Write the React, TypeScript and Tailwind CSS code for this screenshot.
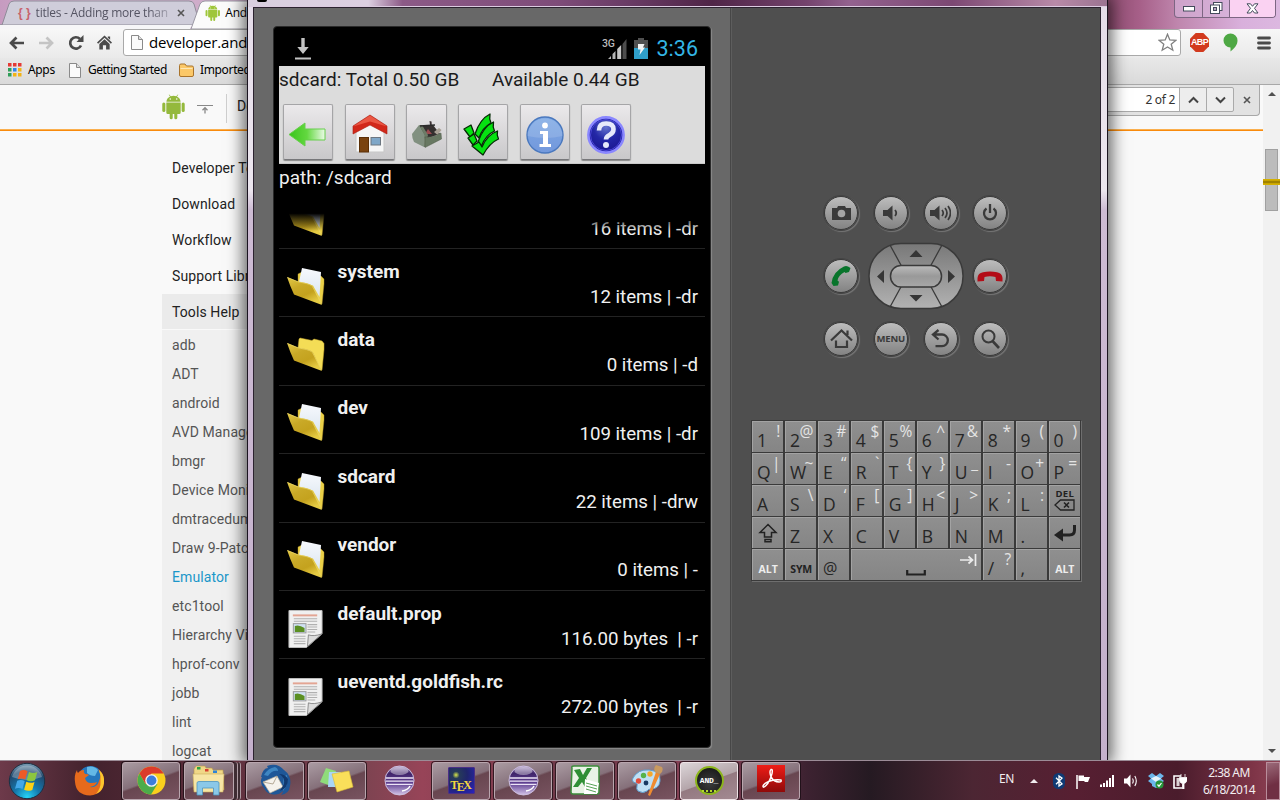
import React from "react";

const ROBOTO = "font-['Roboto','Noto_Sans',sans-serif]";
const NOTO = "font-['Noto_Sans','Open_Sans',sans-serif]";
const OPEN = "font-['Open_Sans','Noto_Sans',sans-serif]";

type IconProps = { className?: string };

/* ---------- browser icons ---------- */

function Android({ className }: IconProps) {
  return (
    <svg viewBox="0 0 24 26" className={className} fill="currentColor">
      <path d="M4.5 8.2h15v10.6a1.6 1.6 0 0 1-1.6 1.6H16v3.8a1.6 1.6 0 0 1-3.2 0v-3.8h-1.6v3.8a1.6 1.6 0 0 1-3.2 0v-3.8H6.1a1.6 1.6 0 0 1-1.6-1.6z" />
      <rect x="0.3" y="8.2" width="3.2" height="10" rx="1.6" />
      <rect x="20.5" y="8.2" width="3.2" height="10" rx="1.6" />
      <path d="M4.6 7.4C4.8 4.9 6.3 3 8.4 2L7 .3l.5-.3 1.6 1.7a8.500 8.500 0 0 1 5.800 0L16.500 0l.5.300L15.600 2c2.100 1 3.600 2.900 3.800 5.400z" />
      <circle cx="8.600" cy="4.700" r=".8" fill="#fff" />
      <circle cx="15.400" cy="4.700" r=".8" fill="#fff" />
    </svg>
  );
}

function Page() {
  return (
    <svg width="12" height="15" viewBox="0 0 12 15">
      <path d="M.5.500h7l4 4v10H.5z" fill="#fafafa" stroke="#8a8a8a" />
      <path d="M7.500.500v4h4" fill="#ddd" stroke="#8a8a8a" />
    </svg>
  );
}

function AppsGrid() {
  const c = ["#e53a35", "#e53a35", "#e53a35", "#2f9e58", "#2f86e8", "#f2b316", "#2f9e58", "#f2b316", "#f2b316"];
  return (
    <svg width="14" height="14" viewBox="0 0 14 14">
      {c.map((f, i) => (
        <rect key={i} x={(i % 3) * 5} y={Math.floor(i / 3) * 5} width="3.500" height="3.500" fill={f} />
      ))}
    </svg>
  );
}

const CloseX = () => (
  <svg width="8" height="8" viewBox="0 0 8 8">
    <path d="M1 1l6 6M7 1L1 7" stroke="#555" strokeWidth="1.600" />
  </svg>
);

function LeftArrow({ color, flip }: { color: string; flip?: boolean }) {
  return (
    <svg width="16" height="14" viewBox="0 0 16 14">
      <g transform={flip ? "translate(16 0) scale(-1 1)" : undefined}>
        <path d="M7.500 1.500L2 7l5.500 5.500M2.500 7H15" fill="none" stroke={color} strokeWidth="2.700" />
      </g>
    </svg>
  );
}

function BrowserTabs() {
  return (
    <div className="flex h-[29px] items-start overflow-hidden bg-[linear-gradient(90deg,#c69bc0_0%,#d8bcd4_8%,#c9a3c3_20%,#8a4a6c_86%,#a65f88_89%,#bf86ad_92%,#d9b0dc_97%,#dcb8e0_100%)]">
      <div className="relative h-[29px] w-[247px]">
        <svg width="247" height="29" viewBox="0 0 247 29" className="block">
          <path d="M0 25H2L9 4q1-3 5-3H189q4 0 5 3l6 21z" fill="#cfcdda" stroke="#8f8c99" />
          <path d="M191 29L200 4q1.500-3 5-3h43v28z" fill="#fbfbfb" stroke="#9a97a3" />
          <path d="M0 25h192l-2 4H0z" fill="#f6f6f8" />
        </svg>
        <div className="absolute inset-0 flex h-[26px] items-center">
          <span className="ml-[18px] flex w-[13px] justify-between text-[12px] font-bold whitespace-nowrap text-[#c7626c] font-['Liberation_Sans',sans-serif]">
            <i className="not-italic">{"{"}</i>
            <i className="not-italic">{"}"}</i>
          </span>
          <span className={`ml-[5px] w-[136px] text-[12px] tracking-[-0.24px] whitespace-nowrap text-[#555463] [mask-image:linear-gradient(90deg,#000_85%,rgba(0,0,0,0.35))] ${OPEN}`}>
            titles - Adding more than
          </span>
          <span className="ml-[9px]"><CloseX /></span>
          <Android className="ml-[20px] h-[16px] w-[16px] text-[#9fc63b]" />
          <span className={`ml-[5px] text-[12px] tracking-[-0.2px] text-black ${OPEN}`}>And</span>
        </div>
      </div>
      <div className="ml-auto mr-[4px] flex h-[18px] w-[102px] overflow-hidden rounded-b-[4px] border border-t-0 border-[#7d6683] bg-[#d9b8dd]/60">
        <div className="flex w-[28px] items-center justify-center border-r border-[#7d6683]">
          <svg width="12" height="6"><rect x=".5" y=".5" width="11" height="4.500" fill="#fff" stroke="#444b5c" /></svg>
        </div>
        <div className="flex w-[27px] items-center justify-center border-r border-[#7d6683] pb-[2px]">
          <svg width="13" height="12" viewBox="0 0 13 12">
            <rect x="3.500" y=".5" width="8.500" height="8" fill="#fff" stroke="#444b5c" />
            <rect x=".5" y="3" width="9" height="8.500" fill="#fff" stroke="#444b5c" />
            <rect x="3.500" y="5.500" width="3" height="3" fill="#b9a2c2" stroke="#444b5c" />
          </svg>
        </div>
        <div className="flex flex-1 items-center justify-center bg-[#fad2f2] pb-[1px]">
          <svg width="13" height="11" viewBox="0 0 13 11">
            <path d="M1 .8h3.500l2 2.500 2-2.500H12L8.500 5.300l3.500 4.700H8.500l-2-2.500-2 2.500H1l3.500-4.700z" fill="#fff" stroke="#444b5c" />
          </svg>
        </div>
      </div>
    </div>
  );
}

function BrowserToolbar() {
  return (
    <div className="flex h-[29px] items-center bg-gradient-to-b from-[#f7f7f7] to-[#eaeaea] pb-[2px] pl-[9px]">
      <LeftArrow color="#4a4a4a" />
      <span className="ml-[13px] flex"><LeftArrow color="#c4c4c4" flip /></span>
      <svg className="ml-[14px]" width="16" height="16" viewBox="0 0 16 16">
        <path d="M13 10.500A5.700 5.700 0 1 1 12 4" fill="none" stroke="#4a4a4a" strokeWidth="2.700" />
        <path d="M15.500 0v7H8.500z" fill="#4a4a4a" />
      </svg>
      <svg className="ml-[13px]" width="15" height="15" viewBox="0 0 16 15">
        <path d="M8 0l8 7.500-1.200 1.200L8 2.500 1.200 8.700 0 7.500zM11.500 1H14v3.600l-2.500-2.300z" fill="#4a4a4a" />
        <path d="M2.500 9L8 4l5.500 5v6H9.700v-4.500H6.300V15H2.500z" fill="#4a4a4a" />
      </svg>
      <div className="ml-[11px] flex h-[27px] w-[1058px] shrink-0 items-center rounded-[3px] border border-[#a9a9a9] bg-white pl-[7px]">
        <Page />
        <span className={`ml-[6px] text-[15px] tracking-[-0.2px] text-black ${OPEN}`}>developer.and</span>
        <svg className="mr-[3px] ml-auto" width="19" height="19" viewBox="0 0 19 19">
          <path d="M9.500 1.200l2.300 5.700 6.200.4-4.800 3.900 1.600 6-5.300-3.300-5.300 3.300 1.600-6L1 7.300l6.200-.4z" fill="#fff" stroke="#808080" strokeWidth="1.300" />
        </svg>
      </div>
      <div className="ml-[9px] flex h-[19px] w-[19px] items-center justify-center bg-[#d23a1e] [clip-path:polygon(30%_0,70%_0,100%_30%,100%_70%,70%_100%,30%_100%,0_70%,0_30%)]">
        <span className="text-[9px] font-bold tracking-[-0.7px] text-white font-['Liberation_Sans',sans-serif]">ABP</span>
      </div>
      <svg className="ml-[14px]" width="15" height="19" viewBox="0 0 15 19">
        <path d="M7.500.500a7 7 0 0 1 7 7c0 4.500-3 7.500-7 11v-4a7 7 0 0 1 0-14z" fill="#4ea844" />
      </svg>
      <svg className="ml-[19px]" width="14" height="14" viewBox="0 0 14 14">
        <path d="M1.500 2h11M1.500 7h11M1.500 12h11" stroke="#4a4a4a" strokeWidth="2.800" strokeLinecap="round" />
      </svg>
    </div>
  );
}

function Bookmarks() {
  return (
    <div className={`flex h-[27px] items-center border-b border-[#a8a8a8] bg-gradient-to-b from-[#e8e8e8] to-[#dadada] pb-[2px] pl-[8px] text-[12px] text-black ${NOTO}`}>
      <AppsGrid />
      <span className="ml-[6px] w-[28px] tracking-[-0.35px]">Apps</span>
      <span className="ml-[13px] flex"><Page /></span>
      <span className="ml-[7px] w-[79px] tracking-[-0.5px] whitespace-nowrap">Getting Started</span>
      <svg className="ml-[12px]" width="15" height="14" viewBox="0 0 15 14">
        <path d="M.5 2.500q0-1.500 1.500-1.500h4l1.500 2H13q1.500 0 1.500 1.500V12q0 1.500-1.500 1.500H2Q.5 13.500.5 12z" fill="#fbc868" stroke="#a9742c" />
        <path d="M1.500 5h12v1h-12z" fill="#fde7b5" />
      </svg>
      <span className="ml-[6px] tracking-[-0.35px]">Imported</span>
    </div>
  );
}

const SUB = ["adb", "ADT", "android", "AVD Manager", "bmgr", "Device Monitor", "dmtracedump", "Draw 9-Patch", "Emulator", "etc1tool", "Hierarchy Viewer", "hprof-conv", "jobb", "lint", "logcat"];

function WebPage() {
  return (
    <div className="flex min-h-0 flex-1 bg-[#f9f9f9]">
      <div className="flex min-w-0 flex-1 flex-col">
        <div className="flex h-[46px] shrink-0 items-start bg-[linear-gradient(180deg,transparent_44.5px,#fbb04f_44.5px,#f98b0d_45px)]">
          <Android className="mt-[9px] ml-[162px] h-[26px] w-[23px] text-[#94b93c]" />
          <svg className="mt-[20px] ml-[12px]" width="16" height="9" viewBox="0 0 16 9">
            <path d="M0 .500h16" stroke="#888" />
            <path d="M8 8.500V3M5.500 5.300L8 2.700l2.500 2.600" fill="none" stroke="#888" strokeWidth="1.300" />
          </svg>
          <div className="mt-[9px] ml-[13px] h-[29px] w-px bg-[#cfcfcf]" />
          <span className={`mt-[11px] ml-[10px] text-[14px] text-[#222] ${ROBOTO}`}>Develop</span>
          <div className={`ml-auto flex h-[31px] w-[170px] items-center rounded-br-[4px] border-r border-b border-[#a8a8a8] bg-[#e2e2e2] pb-[1px] text-[12px] text-[#333] ${NOTO}`}>
            <div className="flex h-[25px] w-[90px] items-center justify-end border border-[#aaa] bg-white pr-[4px] tracking-[-0.3px]">2 of 2</div>
            <div className="-ml-px flex h-[25px] w-[28px] items-center justify-center border border-[#aaa] bg-[#ededed]">
              <svg width="11" height="8" viewBox="0 0 11 8"><path d="M1 6.500L5.500 2 10 6.500" fill="none" stroke="#444" strokeWidth="2" /></svg>
            </div>
            <div className="-ml-px flex h-[25px] w-[28px] items-center justify-center rounded-r-[2px] border border-[#aaa] bg-[#ededed]">
              <svg width="11" height="8" viewBox="0 0 11 8"><path d="M1 1.500L5.500 6 10 1.500" fill="none" stroke="#444" strokeWidth="2" /></svg>
            </div>
            <span className="ml-[9px]"><CloseX /></span>
          </div>
          <div className="w-[3px]" />
        </div>
        <nav className={`ml-[162px] w-[200px] pt-[19px] text-[14px] tracking-[0.1px] text-[#222] ${ROBOTO}`}>
          {["Developer Tools", "Download", "Workflow", "Support Library"].map((t) => (
            <div key={t} className="h-[36px] pl-[10px] leading-[36px]">{t}</div>
          ))}
          <div className="h-[35px] bg-[#ebebeb] pl-[10px] leading-[36px]">Tools Help</div>
          <div className="mt-px h-[440px] bg-[#f0f0f0] text-[#555]">
            {SUB.map((t) => (
              <div key={t} className={t === "Emulator" ? "h-[29px] pl-[10px] leading-[31px] text-[#1b97c9]" : "h-[29px] pl-[10px] leading-[31px]"}>{t}</div>
            ))}
          </div>
        </nav>
      </div>
      <div className="flex w-[17px] shrink-0 flex-col items-center bg-[#f1f1f1]">
        <div className="mt-[7px] border-x-[4px] border-b-[4px] border-x-transparent border-b-[#505050]" />
        <div className="mt-[53px] flex h-[62px] w-[13px] flex-col justify-center border border-[#a0a0a0] bg-[#bcbcbc]" />
        <div className="-mt-[32px] flex h-[6px] w-[17px] flex-col justify-between border-y border-[#d4b000] bg-[#c9a400]">
          <div className="mt-px h-[2px] bg-[#a08200]" />
        </div>
        <div className="mt-auto mb-[7px] border-x-[4px] border-t-[4px] border-x-transparent border-t-[#505050]" />
      </div>
    </div>
  );
}

/* ---------- file browser screen ---------- */

function Folder({ empty }: { empty?: boolean }) {
  return (
    <svg width="38" height="38" viewBox="0 0 38 38" className="block">
      <defs>
        <linearGradient id="fold" x1="0" y1="0" x2=".6" y2="1">
          <stop offset="0" stopColor="#e4ca48" />
          <stop offset=".4" stopColor="#c9a927" />
          <stop offset=".7" stopColor="#c4a21e" />
          <stop offset="1" stopColor="#e6cc44" />
        </linearGradient>
        <linearGradient id="sheet" x1="0" y1="0" x2="0" y2="1">
          <stop offset="0" stopColor="#f7f9fd" />
          <stop offset="1" stopColor="#dbe6f0" />
        </linearGradient>
      </defs>
      {empty ? (
        <path d="M12 5l1-1 12 2.500 2-1.500 8 2 2 2.500v6L35 36 11 14z" fill="#f4dd56" stroke="#c8a82c" strokeWidth=".5" />
      ) : (
        <>
          <path d="M11 6l3-1.500L34 8l3 3v5l-2 20-24-22z" fill="#ead048" stroke="#b8982a" strokeWidth=".4" />
          <path d="M15 0l19 4-1.500 25L26 17.500 12 14z" fill="url(#sheet)" />
        </>
      )}
      <path d="M0 9L11 13.500L16 14.500Q24 16 26 18.500L35 37L7 26.500Q3 18 0 9z" fill="url(#fold)" />
      <path d="M.5 9.500L11 13.800L16 14.800Q24 16.300 25.700 18.800L34.500 36" fill="none" stroke="#ecd868" strokeWidth=".7" />
    </svg>
  );
}

function DocIcon() {
  return (
    <svg width="37" height="40" viewBox="0 0 38 40" className="block">
      <path d="M2 1h34v24L20 39H2z" fill="#f0f0f0" stroke="#bbb" />
      <path d="M6 6h25" stroke="#e3a593" strokeWidth="2" />
      <path d="M7 9.500h24M7 12h24M21 15.500h10M21 18h10M21 20.500h10M21 23h8M7 27.500h12M7 30h12M7 32.500h12M7 35h12" stroke="#b0b0b0" strokeWidth="1.100" />
      <rect x="6.500" y="14.500" width="13" height="9.500" fill="#cfe0f2" stroke="#999" />
      <path d="M8 17q4-2 10 2v4H8z" fill="#5b8f22" />
      <path d="M21 38l1-12q5 2 14-1z" fill="#dcdcdc" stroke="#777" strokeWidth=".8" />
    </svg>
  );
}

const ROWS: { name: string; info: string; kind: "full" | "empty" | "doc" }[] = [
  { name: "system", info: "12 items | -dr", kind: "full" },
  { name: "data", info: "0 items | -d", kind: "empty" },
  { name: "dev", info: "109 items | -dr", kind: "full" },
  { name: "sdcard", info: "22 items | -drw", kind: "full" },
  { name: "vendor", info: "0 items | -", kind: "full" },
  { name: "default.prop", info: "116.00 bytes  | -r", kind: "doc" },
  { name: "ueventd.goldfish.rc", info: "272.00 bytes  | -r", kind: "doc" },
];

const ICON_OFFSET = {
  full: "mt-[9px] w-[50.500px]",
  empty: "mt-[7.500px] w-[50.500px]",
  doc: "mt-[8px] w-[50.500px]",
};

function ToolButton({ w, children }: { w: string; children: React.ReactNode }) {
  return (
    <div className={`flex h-[56px] items-center justify-center rounded-[2px] border border-[#a5a5a7] border-b-[#77777a] bg-gradient-to-b from-[#ebe9eb] to-[#c9c8ca] pt-[5px] shadow-[0_1px_1px_#888] ${w}`}>
      {children}
    </div>
  );
}

function Tools() {
  return (
    <div className="flex items-start pl-[4px]">
      <ToolButton w="w-[50px]">
        <svg className="-ml-[2px]" width="38" height="26" viewBox="0 0 38 26">
          <defs>
            <linearGradient id="arr"><stop offset="0" stopColor="#39c41c" /><stop offset=".5" stopColor="#63d840" /><stop offset="1" stopColor="#ecfbe8" /></linearGradient>
          </defs>
          <path d="M1 12.500L17 1v6h20v11H17v6z" fill="url(#arr)" stroke="#67cf4c" />
        </svg>
      </ToolButton>
      <div className="w-[12px]" />
      <ToolButton w="w-[50px]">
        <svg className="-ml-[1px] -mt-[2px]" width="36" height="40" viewBox="0 0 36 40">
          <path d="M4 16L18 8l14 8v22H4z" fill="#f6f6f6" stroke="#c7c7c7" />
          <path d="M18 1L35 12v8L18 11 1 20v-8z" fill="#d2281a" stroke="#a81c10" strokeWidth=".6" />
          <path d="M18 1.500L35 12.500 18 7.500 1 12.500z" fill="#ea5744" />
          <rect x="7.500" y="23.500" width="9" height="14.500" fill="#7a4310" stroke="#5c3008" />
          <rect x="19" y="23.500" width="9.500" height="7.500" fill="#7fa7c8" stroke="#6c7680" />
        </svg>
      </ToolButton>
      <div className="w-[11px]" />
      <ToolButton w="w-[41px]">
        <svg width="32" height="30" viewBox="0 0 32 30">
          <path d="M8 6l14-1 7 9-15 5z" fill="#34302f" />
          <path d="M14 14l3-5 4 5z" fill="#9c4a50" />
          <path d="M18.500 1l2 .5.5 6-1.500 1z" fill="#3c3335" />
          <path d="M23 12l5-4 2.500 2-4 5z" fill="#a9a195" />
          <path d="M1 14L8 5l6 10-1 12L3 22q-2-4-2-8z" fill="#819080" />
          <path d="M8 5l3 0 6 10-3 12h-1l.5-12z" fill="#6c7b66" />
          <path d="M14 17q9 1 16-4l.5 6L14 27.500z" fill="#687862" stroke="#4c5847" strokeWidth=".5" />
          <path d="M9 6L24 5" stroke="#2b2b2b" strokeWidth="1.300" />
        </svg>
      </ToolButton>
      <div className="w-[11px]" />
      <ToolButton w="w-[50px]">
        <svg className="-ml-[3px]" width="37" height="43" viewBox="0 0 37 43" fill="#06e311" stroke="#052b05" strokeWidth="1.300" strokeLinejoin="round">
          <path d="M1 16l7-4 3 8-4 4z" />
          <path d="M12 21Q17 6 27 1q-1 5 1 9-9 5-12 15z" />
          <path d="M5 25l6-4 3 7-4 4z" />
          <path d="M15 29Q20 14 30.500 9q-1 5 1 9-9 4-13 15z" />
          <path d="M9 33l7-4 3 5Q24 22 34.500 18q-1 4 1 8-9 4-15.500 16z" />
        </svg>
      </ToolButton>
      <div className="w-[12px]" />
      <ToolButton w="w-[50px]">
        <svg width="38" height="38" viewBox="0 0 38 38">
          <defs><linearGradient id="inf" x1="0" y1="0" x2="0" y2="1"><stop offset="0" stopColor="#7ea9e4" /><stop offset="1" stopColor="#7398dc" /></linearGradient></defs>
          <circle cx="19" cy="19" r="18" fill="url(#inf)" stroke="#4a78be" strokeWidth="1.400" />
          <path d="M1.500 20a17.500 17.500 0 0 1 35 0q-17 4-35 0z" fill="#fff" opacity=".14" />
          <circle cx="19" cy="9.500" r="2.900" fill="#fff" />
          <path d="M14 15h8v13h3v3H13.500v-3h3.500V18h-3z" fill="#fff" />
        </svg>
      </ToolButton>
      <div className="w-[11px]" />
      <ToolButton w="w-[50px]">
        <svg width="38" height="38" viewBox="0 0 38 38">
          <defs><radialGradient id="hlp" cx=".5" cy=".25" r=".8"><stop offset="0" stopColor="#6474cf" /><stop offset=".5" stopColor="#2327a6" /><stop offset="1" stopColor="#1a1690" /></radialGradient></defs>
          <circle cx="19" cy="19" r="17.600" fill="#1c1c9c" stroke="#8a87ff" strokeWidth="2.600" />
          <circle cx="19" cy="19" r="15.500" fill="url(#hlp)" stroke="#4a46d8" />
          <path d="M12 14.500q0-7 7.200-7 7.300 0 7.300 5.800 0 3.700-4 5.700-3.500 1.800-3.500 4.500" fill="none" stroke="#e6e9fb" strokeWidth="4.600" />
          <circle cx="19" cy="29" r="3" fill="#e6e9fb" />
        </svg>
      </ToolButton>
    </div>
  );
}

function PhoneScreen() {
  return (
    <div className={`flex h-[722px] w-[438px] flex-col overflow-hidden rounded-[4px] border border-[#2a2a2a] bg-black px-[5px] shadow-[1px_1px_1px_#8a8a8a] ${ROBOTO}`}>
      <div className="flex h-[39px] shrink-0 items-center pt-[4px] pr-[7px] pl-[16px]">
        <svg width="16" height="22" viewBox="0 0 16 22">
          <path d="M6.300 0h3.400v9h4L8 16 2.300 9h4z" fill="#c3c3c3" />
          <path d="M0 20.500h16" stroke="#c3c3c3" strokeWidth="2" />
        </svg>
        <span className="ml-auto -mt-[9px] text-[10.500px] leading-none font-medium tracking-[-0.3px] text-[#bbb]">3G</span>
        <svg className="-ml-[7px]" width="19" height="20" viewBox="0 0 19 20">
          <path d="M0 20h3v-3zM4.500 20h3v-8l-3 3z" fill="#b5b5b5" />
          <path d="M14.500 20h4V0l-4 5z" fill="#4d4d4d" />
          <path d="M9.200 20h4V6l-4 4z" fill="#c7c7c7" />
        </svg>
        <svg className="mr-px ml-[7px]" width="14" height="21" viewBox="0 0 14 21">
          <path d="M4 0h6v2h4v8H0V2h4z" fill="#505050" />
          <path d="M0 10h14v11H0z" fill="#2f9fca" />
          <path d="M4 6h6.500L9 9.500h2L5.500 17l1-5.500H4z" fill="#f4f4f4" />
        </svg>
        <span className="mt-[1px] ml-[8px] text-[21.500px] leading-none text-[#33b5e5]">3:36</span>
      </div>
      <div className="h-[98px] shrink-0 border-b border-[#c9c9c9] bg-[#dcdcdc] text-[19px] text-[#1b1b1b]">
        <div className="flex h-[38px] pt-[1px] leading-[26px] whitespace-nowrap">
          <span className="w-[213px]">sdcard: Total 0.50 GB</span>
          <span>Available 0.44 GB</span>
        </div>
        <Tools />
      </div>
      <div className="h-[25px] shrink-0 text-[19px] leading-[27px] text-[#f0f0f0]">path: /sdcard</div>
      <div className="relative min-h-0 flex-1 overflow-hidden text-[19px] text-[#f0f0f0]">
        <div className="flex h-[60px] border-b border-[#232323] pr-[7px] pl-[8px]">
          <div className="mt-[10px]"><Folder /></div>
          <span className="mt-[27.500px] ml-auto text-[18.600px] leading-[25px]">16 items | -dr</span>
        </div>
        {ROWS.map((r) => (
          <div key={r.name} className="flex h-[68.400px] border-b border-[#232323] pt-[9.600px] pr-[7px] pl-[8px]">
            <div className={ICON_OFFSET[r.kind]}>{r.kind === "doc" ? <DocIcon /> : <Folder empty={r.kind === "empty"} />}</div>
            <div className="flex flex-1 flex-col">
              <span className="leading-[25.300px] font-bold">{r.name}</span>
              <span className="mt-[1px] self-end text-[18.700px] leading-[25.300px] whitespace-pre">{r.info}</span>
            </div>
          </div>
        ))}
        <div className="absolute inset-x-0 top-0 h-[42px] bg-[linear-gradient(180deg,#000_0%,#000_58%,transparent_100%)]" />
      </div>
    </div>
  );
}

/* ---------- hardware controls ---------- */

function Round({ children }: { children: React.ReactNode }) {
  return (
    <div className="flex h-[34px] w-[34px] items-center justify-center rounded-full border border-[#3b3b3b] bg-gradient-to-b from-[#bdbdbd] to-[#838383] shadow-[0_0_0_1px_#444,1px_1px_1px_1px_#777]">
      {children}
    </div>
  );
}

function DPad() {
  return (
    <svg width="96" height="68" viewBox="0 0 96 68">
      <defs>
        <linearGradient id="pad" x1="0" y1="0" x2="0" y2="1"><stop offset="0" stopColor="#787878" /><stop offset="1" stopColor="#b2b2b2" /></linearGradient>
        <linearGradient id="mid" x1="0" y1="0" x2="0" y2="1"><stop offset="0" stopColor="#bcbcbc" /><stop offset=".5" stopColor="#999" /><stop offset="1" stopColor="#a8a8a8" /></linearGradient>
      </defs>
      <rect x="1" y="1.500" width="94" height="65" rx="32" fill="url(#pad)" stroke="#3a3a3a" strokeWidth="1.500" />
      <path d="M22 3l12 22M74 3L62 25M22 65l12-22M74 65L62 43" stroke="#3a3a3a" strokeWidth="1.300" />
      <rect x="22.500" y="23.500" width="51" height="21.500" rx="10.500" fill="url(#mid)" stroke="#3a3a3a" strokeWidth="1.500" />
      <path d="M41.500 15h13L48 8zM41.500 53h13L48 59.500zM16 28v13l-7-6.500zM80 28v13l7-6.500z" fill="#363636" />
    </svg>
  );
}

function Controls() {
  const g = "#3a3a3a";
  return (
    <div className="grid w-[184px] grid-cols-[34px_34px_34px_34px] gap-x-[15.800px] gap-y-[29px]">
      <Round>
        <svg width="19" height="14" viewBox="0 0 19 14"><path d="M0 2h5l1-2h7l1 2h5v12H0z" fill={g} /><circle cx="9.500" cy="7.500" r="3.800" fill="#a4a4a4" /></svg>
      </Round>
      <Round>
        <svg width="16" height="16" viewBox="0 0 16 16"><path d="M0 5h4.500L9.500.500v15L4.500 11H0z" fill={g} /><path d="M12 5q2.500 3 0 6" fill="none" stroke={g} strokeWidth="1.800" /></svg>
      </Round>
      <Round>
        <svg width="21" height="16" viewBox="0 0 21 16"><path d="M0 5h4.500L9.500.500v15L4.500 11H0z" fill={g} /><path d="M12 5q2.500 3 0 6M15 3q4 5 0 10M18 1q5 7 0 14" fill="none" stroke={g} strokeWidth="1.700" /></svg>
      </Round>
      <Round>
        <svg width="16" height="18" viewBox="0 0 16 18"><path d="M4.500 4.500a6 6 0 1 0 7 0M8 0v9" fill="none" stroke={g} strokeWidth="2.300" /></svg>
      </Round>
      <Round>
        <svg width="22" height="22" viewBox="0 0 22 22"><path d="M14 1.500q2-1 4 0l2.500 1.500-1.500 4-3.500 1-1-1q-6 3-7 8.500l1.500 1.200-1 3.800-4.500.5-2-3Q3 6.500 14 1.500z" fill="#08742b" /></svg>
      </Round>
      <div className="col-span-2 -my-[17px] -ml-[6px] w-[96px]"><DPad /></div>
      <Round>
        <svg width="26" height="11" viewBox="0 0 26 11"><path d="M.5 7Q1 2 6 1.200q7-1.500 14 0 5 .8 5.500 5.800v3.500l-6.500-.5-.5-4q-5.500-1.500-11 0l-.5 4-6.500.5z" fill="#b30d18" /></svg>
      </Round>
      <Round>
        <svg width="23" height="20" viewBox="0 0 23 20"><path d="M1 11.500L11.500 1.500 22 11.500M6 11.500v6.500h11v-6.500M17.500 6V1.500" fill="none" stroke={g} strokeWidth="2.200" /></svg>
      </Round>
      <Round><span className={`pt-[1px] text-[9.500px] font-bold tracking-[-0.2px] text-[#3a3a3a] ${OPEN}`}>MENU</span></Round>
      <Round>
        <svg width="19" height="20" viewBox="0 0 19 20"><path d="M7.500 1L2 5.500l5.500 5M2 5.500h9a5.700 5.700 0 0 1 0 11.700H4.500" fill="none" stroke={g} strokeWidth="2.300" /></svg>
      </Round>
      <Round>
        <svg width="19" height="20" viewBox="0 0 19 20"><circle cx="7.500" cy="7.500" r="6" fill="none" stroke={g} strokeWidth="2" /><path d="M11.500 12l6.500 7" stroke={g} strokeWidth="2.600" /></svg>
      </Round>
    </div>
  );
}

const KEYS: [string, string][] = [
  ["1", "!"], ["2", "@"], ["3", "#"], ["4", "$"], ["5", "%"], ["6", "^"], ["7", "&"], ["8", "*"], ["9", "("], ["0", ")"],
  ["Q", "|"], ["W", "~"], ["E", "“"], ["R", "`"], ["T", "{"], ["Y", "}"], ["U", "_"], ["I", "-"], ["O", "+"], ["P", "="],
  ["A", ""], ["S", "\\"], ["D", "‘"], ["F", "["], ["G", "]"], ["H", "<"], ["J", ">"], ["K", ";"], ["L", ":"], ["DEL", ""],
  ["SHIFT", ""], ["Z", ""], ["X", ""], ["C", ""], ["V", ""], ["B", ""], ["N", ""], ["M", ""], [".", ""], ["ENTER", ""],
  ["ALT", ""], ["SYM", ""], ["@", ""], ["SPACE", ""], ["/", "?"], [",", ""], ["ALT", ""],
];

function KeyFace({ k, s }: { k: string; s: string }) {
  if (k === "DEL")
    return (
      <div className="flex w-full flex-col items-center text-[9.500px] leading-[11px] font-bold tracking-[0.3px] text-[#222]">
        <span className="mt-[2px]">DEL</span>
        <svg width="21" height="12" viewBox="0 0 21 12"><path d="M6.500 1H20v10H6.500L1 6z" fill="none" stroke="#222" strokeWidth="1.300" /><path d="M10 3.500l5 5M15 3.500l-5 5" stroke="#222" strokeWidth="1.600" /></svg>
      </div>
    );
  if (k === "SHIFT")
    return <svg className="m-auto" width="20" height="20" viewBox="0 0 20 20"><path d="M10 1.500l8 8h-4.500v4.500h-7V9.500H2zM7 16.500h6v2.300H7z" fill="none" stroke="#222" strokeWidth="1.500" /></svg>;
  if (k === "ENTER")
    return <svg className="m-auto" width="24" height="18" viewBox="0 0 24 18"><path d="M21.500 1v5q0 5-5 5H7" fill="none" stroke="#222" strokeWidth="3" /><path d="M1 11l9-6.500v13z" fill="#222" /></svg>;
  if (k === "SPACE")
    return (
      <div className="flex w-full flex-col">
        <svg className="mt-[4px] mr-[4px] self-end" width="17" height="12" viewBox="0 0 17 12"><path d="M0 6h12M8.500 2.500L12.500 6 8.500 9.500M15.500 0v12" fill="none" stroke="#ececec" strokeWidth="1.700" /></svg>
        <svg className="mt-[4px] self-center" width="20" height="6" viewBox="0 0 20 6"><path d="M1.200 0v4.500h17.600V0" fill="none" stroke="#222" strokeWidth="2.200" /></svg>
      </div>
    );
  if (k === "ALT") return <span className="m-auto pt-[9px] text-[10.500px] font-bold text-[#ededed]">ALT</span>;
  if (k === "SYM") return <span className="m-auto pt-[9px] text-[10.500px] font-bold tracking-[-0.2px] text-[#222]">SYM</span>;
  return (
    <div className="flex w-full justify-between">
      <span className={"mt-[7px] -mr-[6px] ml-[4px] leading-[22px] text-[#262626] " + (k === "@" ? "text-[16px]" : "text-[17.500px]")}>{k}</span>
      <span className="mr-[3px] text-[15.500px] leading-[19px] text-[#e4e4e4]">{s}</span>
    </div>
  );
}

function Keyboard() {
  return (
    <div className={`grid h-[161px] w-[330px] grid-cols-10 grid-rows-5 gap-[1.500px] border border-[#3a3a3a] bg-[#3a3a3a] shadow-[1px_1px_0_#6e6e6e] ${OPEN}`}>
      {KEYS.map(([k, s], i) => (
        <div key={i} className={"flex min-w-0 overflow-hidden border-t border-l border-[#a3a3a3] bg-gradient-to-b from-[#8f8f8f] to-[#858585] " + (k === "SPACE" ? "col-span-4" : "")}>
          <KeyFace k={k} s={s} />
        </div>
      ))}
    </div>
  );
}

function EmulatorWindow() {
  return (
    <div className="absolute top-0 left-[247px] flex h-[760px] w-[861px] flex-col border-x border-[#1b1420] bg-[linear-gradient(180deg,#e4dbe8_0px,#ece6ee_190px,#cdbbd3_210px,#c3b0cb_760px)] shadow-[0_0_15px_4px_rgba(0,0,0,0.6)]">
      <div className="h-[7px] shrink-0 overflow-hidden border-b border-[#dccbe0] bg-[linear-gradient(90deg,#d9cfdf_0%,#dccfe1_14%,#8c5a87_18%,#7e4c79_36%,#6a3c66_44%,#4f2547_54%,#74436d_65%,#93628f_70%,#7c4873_82%,#b88aa8_94%,#9b7391_100%)]">
        <div className="ml-[9px] h-[1.500px] w-[10px] rounded-b bg-black" />
      </div>
      <div className="mr-[6px] ml-[5px] flex min-h-0 flex-1 border border-b-0 border-[#2b222f]">
        <div className="w-[477px] shrink-0 border-r border-[#474747] bg-[#686868] pt-[18px] pl-[19px]">
          <PhoneScreen />
        </div>
        <div className="flex flex-1 flex-col border-l border-[#5d5d5d] bg-[#4f4f4f]">
          <div className="mt-[188px] ml-[92px]"><Controls /></div>
          <div className="mt-[64px] ml-[19px]"><Keyboard /></div>
        </div>
      </div>
    </div>
  );
}

/* ---------- taskbar ---------- */

function TaskItem({ children, plain, active, stack }: { children: React.ReactNode; plain?: boolean; active?: boolean; stack?: boolean }) {
  if (plain) return <div className="mr-[4px] flex h-[38px] w-[58px] items-center justify-center pb-[1px]">{children}</div>;
  return (
    <div className={"mr-[4px] flex h-[38px] " + (stack ? "w-[58px]" : "")}>
      <div className={"flex h-[38px] items-center justify-center rounded-[3px] border pb-[2px] shadow-[0_0_0_1px_rgba(20,10,15,0.7)] " + (stack ? "w-[50px] " : "w-[58px] ") + (active ? "border-[#eee2e6] bg-[linear-gradient(160deg,#dcd5d8_0%,#b4a5aa_50%,#947981_52%,#a38a92_100%)]" : "border-[#b9a6ae] bg-[linear-gradient(160deg,#aa9ba2_0%,#85707a_48%,#684650_52%,#795461_100%)]")}>
        {children}
      </div>
      {stack && <div className="h-[38px] w-[4px] rounded-r-[3px] border-r border-[#ae9ba3] bg-[#3f2c33]" />}
      {stack && <div className="h-[38px] w-[3px] rounded-r-[3px] border-r border-[#ae9ba3] bg-[#3f2c33]" />}
    </div>
  );
}

const Eclipse = () => (
  <svg width="31" height="31" viewBox="0 0 31 31">
    <defs><linearGradient id="ecl" x1="0" y1="0" x2="0" y2="1"><stop offset="0" stopColor="#b6a2cd" /><stop offset=".25" stopColor="#3f2469" /><stop offset=".6" stopColor="#614293" /><stop offset="1" stopColor="#d4c4e8" /></linearGradient></defs>
    <circle cx="15.500" cy="15.500" r="14.500" fill="url(#ecl)" stroke="#cdbfdf" />
    <path d="M2 13h27M1.500 16.200h28M2.500 19.400h26" stroke="#ece4f6" strokeWidth="1.300" />
    <ellipse cx="15.500" cy="6" rx="9" ry="4" fill="#fff" opacity=".4" />
    <path d="M18 26q6-1 8-5" stroke="#fff" strokeWidth="1.500" fill="none" />
  </svg>
);

function Taskbar() {
  return (
    <div className="flex h-[40px] shrink-0 items-start border-t border-[#9c8c97] bg-[linear-gradient(90deg,#6d3a4a_0%,#43222d_7%,#5a2c3a_16%,#7a4350_28%,#974458_33%,#6a3847_45%,#8a4258_55%,#3d2231_63%,#251a22_68%,#4c2633_76%,#571f32_84%,#4a1c2c_92%,#7f3548_98%,#8d4355_100%)] pt-px shadow-[0_-1px_0_#17101a]">
      <div className="flex h-[38px] w-[60px] items-center pl-[8px]">
        <svg width="38" height="38" viewBox="0 0 38 38">
          <defs><radialGradient id="orb" cx=".5" cy=".95" r=".9"><stop offset="0" stopColor="#26d3f7" /><stop offset=".4" stopColor="#1479ae" /><stop offset=".8" stopColor="#20486e" /><stop offset="1" stopColor="#6f93ad" /></radialGradient></defs>
          <circle cx="19" cy="19" r="17.700" fill="url(#orb)" stroke="#1c3144" />
          <path d="M4 15a15.500 15.500 0 0 1 30 0q-15 6-30 0z" fill="#fff" opacity=".28" />
          <path d="M12 9q4-2 7.500.3l-2.300 8.200q-3.500-2-7.500-.3z" fill="#ee5a27" />
          <path d="M21 10q4 2 8.300 0l-2.300 8.200q-4 2-8.300 0z" fill="#8cc63f" />
          <path d="M9.200 18.800q4-1.800 7.500.3l-2.200 8q-3.500-2.200-7.500-.4z" fill="#43a7e8" />
          <path d="M18.300 19.700q4 2.200 8.200.2l-2.200 8q-4.500 2-8.200-.2z" fill="#fcd116" />
        </svg>
      </div>
      <TaskItem plain>
        <svg width="31" height="31" viewBox="0 0 31 31">
          <circle cx="16.500" cy="13.500" r="12.500" fill="#2577bd" />
          <path d="M13 2q7-2 11 3l-3 6q-5 0-8-3z" fill="#63b8e6" />
          <path d="M3 5q0 2 1 3 2-3 6-3-1 2 1 4 3 0 4 1l-4 3q1 5 6 5 4 0 6-1-1 4-7 5 7 1 9-6 3-6-1-12 6 4 6 12Q30 29 16 30.500 2 30 1 17 0 10 3 5z" fill="#e66a1c" />
          <path d="M25 5q6 5 5 13-1 8-8 11 5-6 4.500-12Q27 10 25 5z" fill="#fbc62e" />
        </svg>
      </TaskItem>
      <TaskItem>
        <svg width="29" height="29" viewBox="0 0 29 29">
          <circle cx="14.500" cy="14.500" r="14" fill="#f9cf1d" />
          <path d="M2.400 7.500A14 14 0 0 1 26.700 7.500H14.500L8.500 18z" fill="#db3b2b" />
          <path d="M2.400 7.500A14 14 0 0 0 14 28.500L20.500 18 8.500 18z" fill="#4cac4a" />
          <circle cx="14.500" cy="14.500" r="6.300" fill="#f2f2f2" />
          <circle cx="14.500" cy="14.500" r="4.900" fill="#3c7edb" />
        </svg>
      </TaskItem>
      <TaskItem stack>
        <svg width="34" height="31" viewBox="0 0 34 31">
          <path d="M2 4l2-3h9l1 2h6l1 2h10l1 20H2z" fill="#f0d787" stroke="#b6954a" strokeWidth=".6" />
          <rect x="5" y="2" width="3.500" height="2.500" fill="#2da33f" /><rect x="13" y="4" width="3.500" height="2.500" fill="#d6402f" /><rect x="21" y="5.500" width="4" height="2.500" fill="#2d84d6" />
          <path d="M1 9h31l-1 18H2z" fill="#f7e5a4" stroke="#c9ab5a" strokeWidth=".6" />
          <path d="M5 30V18q0-1.500 2-1.500h18q2 0 2 1.500v12h-5.500v-7h-11v7z" fill="#8bc8e8" stroke="#4d94c0" strokeWidth=".8" />
        </svg>
      </TaskItem>
      <TaskItem>
        <svg width="32" height="32" viewBox="0 0 32 32">
          <path d="M2 13Q4 4 9 4l-1-2Q18-2 25 6q8 6 6 16-1 8-9 9 2-2 2-4-5 5-12 3-5-1-7-6-5-5-2-11z" fill="#1f5798" />
          <path d="M5 11q4-7 11-8 3 1 3 4-6-1-10 5zM28 11q2 9-4 16 1-8 0-14z" fill="#3f86c2" />
          <path d="M4 18l14-6 6 11-13 6z" fill="#f5f2ec" stroke="#b9ac97" strokeWidth=".7" />
          <path d="M4 18l10 2 4-8" fill="none" stroke="#a39781" strokeWidth=".8" />
          <path d="M20 10q6 3 5 10l-4 7q8-3 8-12-3-5-9-5z" fill="#12396f" />
        </svg>
      </TaskItem>
      <TaskItem>
        <svg width="34" height="26" viewBox="0 0 34 26">
          <path d="M6 1l10 3-5 15-11-4z" fill="#8fdc7b" />
          <path d="M9 5h12v15H8z" fill="#a9d6f7" />
          <path d="M12 7l17-3 4 16-16 5z" fill="#f9df5a" stroke="#d8ba35" strokeWidth=".6" />
        </svg>
      </TaskItem>
      <TaskItem plain><Eclipse /></TaskItem>
      <TaskItem>
        <div className="flex h-[27px] w-[27px] items-end justify-center rounded-[1px] border border-[#4b2f86] bg-[radial-gradient(circle_at_28%_28%,#d8e84a_0%,#263a5a_14%,#20256b_45%,#2a23bf_100%)] text-[12px] leading-[15px] font-bold text-[#f2d640] font-['Liberation_Serif',serif]">
          <span>T</span><span className="-mx-[1.500px] -mb-[2px]">E</span><span>X</span>
        </div>
      </TaskItem>
      <TaskItem><Eclipse /></TaskItem>
      <TaskItem>
        <svg width="30" height="30" viewBox="0 0 30 30">
          <path d="M2 3Q1 1 4 1h23q2 0 2 2v24q0 2-2 2H3q-2 0-2-2z" fill="#e9f3e6" stroke="#3c8d3b" strokeWidth="1.500" />
          <path d="M4 5l6-1 3 6 4-7h5l-6 10 5 9h-6l-3-5-4 5H3l6-9z" fill="#2f8f35" />
          <path d="M15 14l14 4-2 11H14z" fill="#fff" /><path d="M16 18l11 3M16 21l11 3M16 24l10 3" stroke="#56a356" />
        </svg>
      </TaskItem>
      <TaskItem>
        <svg width="32" height="32" viewBox="0 0 32 32">
          <path d="M2 14Q7 5 18 6q12 1 11 11-1 8-9 8-3 0-4 2-4 3-9 0-2-2-1-5 1-2-1-3-5-1-3-5z" fill="#bfe0f5" stroke="#5f9fce" />
          <circle cx="7.500" cy="17" r="2.700" fill="#e24b3b" /><circle cx="12.500" cy="11.500" r="2.700" fill="#57b34a" /><circle cx="19" cy="10" r="2.700" fill="#f4a82c" /><circle cx="15" cy="19" r="2.400" fill="#173a63" />
          <path d="M25 8l4 2-10 22-2-1z" fill="#ee8b30" /><path d="M24 8q-2-4 1-7l6 2q2 4-2 7z" fill="#c99a60" />
        </svg>
      </TaskItem>
      <TaskItem active>
        <div className="flex h-[29px] w-[29px] flex-col items-center justify-center rounded-full border-2 border-[#8cb51c] bg-[radial-gradient(circle_at_50%_60%,#3c3c3c,#111)] text-[8px] leading-none font-bold text-white font-['Liberation_Mono',monospace]">
          <span className="h-[10px] tracking-[-0.2px]">AND_</span>
          <span className="mt-[3px] -mb-[8px] flex gap-[2px]"><i className="h-[2px] w-[2px] bg-[#b4d92c]" /><i className="h-[2px] w-[2px] bg-[#b4d92c]" /><i className="h-[2px] w-[2px] bg-[#b4d92c]" /><i className="h-[2px] w-[2px] bg-[#b4d92c]" /></span>
        </div>
      </TaskItem>
      <TaskItem>
        <svg className="-mt-[3px]" width="28" height="27" viewBox="0 0 28 27">
          <defs><linearGradient id="pdf" x1="0" y1="0" x2="0" y2="1"><stop offset="0" stopColor="#ee1c16" /><stop offset="1" stopColor="#8f0a0a" /></linearGradient></defs>
          <rect width="28" height="27" fill="url(#pdf)" />
          <path d="M6 21q1-3 7-5 6-2 11-1 1 2-2 2-5 0-8-5-2-6 0-7.500 2-.5 1 4-2 8-6 12-3 3-3 .5z" fill="none" stroke="#fff" strokeWidth="1.500" />
        </svg>
      </TaskItem>
      <div className={`ml-auto flex h-[38px] items-center text-[12px] text-[#f3eef0] ${NOTO}`}>
        <span className="-mt-[5px] w-[16px] tracking-[-0.3px]">EN</span>
        <div className="ml-[15px] border-x-[4px] border-b-[4px] border-x-transparent border-b-[#f0ecee]" />
        <svg className="ml-[15px]" width="12" height="16" viewBox="0 0 12 16"><rect width="12" height="16" rx="5.500" fill="#0f3a74" /><path d="M3 4.800l6 6L6 13V3l3 2.200-6 6" fill="none" stroke="#fff" strokeWidth="1.300" /></svg>
        <svg className="ml-[11px]" width="15" height="15" viewBox="0 0 15 15"><path d="M1 1v14" stroke="#fff" strokeWidth="1.500" /><path d="M2.500 1.500h5.500v1.500h6l-2 5H9l-1-1H2.500z" fill="#fff" /></svg>
        <svg className="ml-[9px]" width="15" height="12" viewBox="0 0 15 12"><path d="M1 12V9.500M4 12V8M7 12V5.500M10 12V3M13 12V0" stroke="#fff" strokeWidth="2" /></svg>
        <svg className="ml-[9px]" width="14" height="14" viewBox="0 0 14 14"><path d="M0 4.500h3L6.500.500v13L3 9.500H0z" fill="#fff" /><path d="M8.500 4.500q1.500 2.500 0 5M10.800 2q3 5 0 10" fill="none" stroke="#fff" strokeWidth="1.100" /></svg>
        <svg className="ml-[10px]" width="16" height="16" viewBox="0 0 16 16"><path d="M4 0l4 3 4-3 4 3-3 2.500L16 8l-4 3v2l-4 2-4-2v-2L0 8l3-2.500L0 3z" fill="#6cb7ec" /><path d="M8 3l5 2.500L8 9 3 5.500z" fill="#e6f3fc" /><circle cx="11.500" cy="11.500" r="4" fill="#26973a" /><path d="M9.500 11.500l1.500 1.700 2.500-3.200" stroke="#fff" fill="none" strokeWidth="1.200" /></svg>
        <svg className="ml-[9px]" width="14" height="15" viewBox="0 0 14 15"><path d="M8 2H1v12h8" fill="none" stroke="#fff" strokeWidth="1.600" /><path d="M3.500 4h3v8h-3z" fill="#fff" opacity=".8" /><path d="M8 0v3M12 0v3M6.500 3.500H14v3q-1 2.500-3 3V15H9.500V9.500q-2.500-.5-3-3z" stroke="#fff" fill="#fff" strokeWidth=".8" /></svg>
        <div className="ml-[13px] flex w-[58px] flex-col items-center text-[12px] leading-[17px] tracking-[-0.55px] whitespace-nowrap">
          <span>2:38 AM</span>
          <span>6/18/2014</span>
        </div>
        <div className="ml-[8px] h-[38px] w-[14px] border border-[#b98d9b] bg-[linear-gradient(160deg,#9b6a79,#702f43_60%)]" />
      </div>
    </div>
  );
}

export default function App() {
  return (
    <div className="flex h-[800px] w-[1280px] flex-col overflow-hidden">
      <div className="relative flex h-[760px] shrink-0 flex-col overflow-hidden">
        <BrowserTabs />
        <BrowserToolbar />
        <Bookmarks />
        <WebPage />
        <EmulatorWindow />
      </div>
      <Taskbar />
    </div>
  );
}
